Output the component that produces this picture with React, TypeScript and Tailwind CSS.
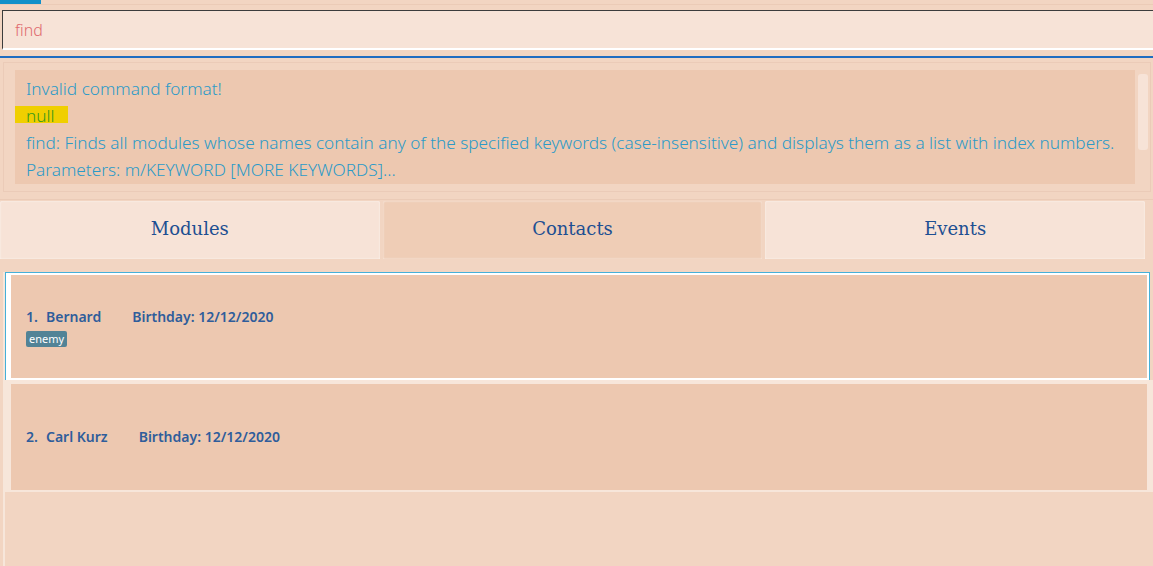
import React from 'react'

const contacts = [
    { id: 1, name: 'Bernard', birthday: '12/12/2020', tags: ['enemy'], selected: true },
    { id: 2, name: 'Carl Kurz', birthday: '12/12/2020', tags: [] as string[], selected: false },
]

const tabs = [
    { label: 'Modules', active: false },
    { label: 'Contacts', active: true },
    { label: 'Events', active: false },
]

export default function App() {
    return (
        <div className="w-[1153px] h-[566px] overflow-hidden bg-[#f2d5c2] flex flex-col font-['Noto_Sans',sans-serif]">
            {/* Top tab indicator */}
            <div className="h-[5px] flex-shrink-0 border-b border-[#ebcbb7]">
                <div className="w-[41px] h-[4px] bg-[#1190c9]" />
            </div>

            {/* Command box */}
            <div className="mt-[5px] ml-[2px] h-[40px] flex-shrink-0 bg-[#f7e3d7] border-t border-l border-[#3c3c3c] border-b-2 border-b-white flex items-center pl-[12px]">
                <span className="text-[16px] font-light text-[#e06a6e]">find</span>
            </div>

            <div className="mt-[6px] h-[2px] flex-shrink-0 bg-[#1f6cc1]" />

            {/* Result display */}
            <div className="mt-[4px] ml-[3px] mr-[2px] h-[130px] flex-shrink-0 border border-[#ebcbb8] flex pl-[11px] pt-[7px] pb-[7px]">
                <div className="flex-1 bg-[#edc8b0] pl-[11px] pt-[5px] text-[17.2px] leading-[27px] font-light text-[#2b9ac8] whitespace-nowrap overflow-hidden">
                    <div>Invalid command format!</div>
                    <div className="relative">
                        <span className="absolute -left-[15px] top-[4px] w-[57px] h-[17px] bg-[#f0cf00]" />
                        <span className="relative text-[#3a9a1a]">null</span>
                    </div>
                    <div>
                        find: Finds all modules whose names contain any of the specified keywords (case-insensitive) and displays them as a list with index numbers.
                    </div>
                    <div>Parameters: m/KEYWORD [MORE KEYWORDS]...</div>
                </div>
                <div className="w-[15px] flex-shrink-0 pl-[3px] pt-[4px]">
                    <div className="w-[10px] h-[76px] rounded-[3px] bg-[#f7e3d7]" />
                </div>
            </div>

            {/* Tabs */}
            <div className="mt-[7px] flex-shrink-0 border-t border-[#ebcbb7] pt-[1px]">
                <div className="flex gap-[3px] pr-[8px] h-[58px]">
                    {tabs.map(t => (
                        <div
                            key={t.label}
                            className={`flex-1 flex items-center justify-center rounded-t-[2px] shadow-[inset_0_0_2px_rgba(255,255,255,0.8)] ${t.active ? 'bg-[#efcdb6]' : 'bg-[#f7e3d7]'}`}
                        >
                            <span className="text-[18px] leading-[24px] -mt-[2px] text-[#1d4f92] font-['DejaVu_Serif',serif]">{t.label}</span>
                        </div>
                    ))}
                </div>
            </div>

            {/* Contact list */}
            <div className="mt-[13px] flex-1 ml-[3px] border-l-2 border-[#f7e6da] flex flex-col">
                {contacts.map(c => (
                    <div
                        key={c.id}
                        className={`flex ${c.selected ? 'h-[109px] border border-[#45b0d8] bg-white p-[2px] pl-[5px] mr-[3px]' : 'h-[112px] px-[6px] pt-[4px] pb-[2px] bg-[#f7e6da] -mt-[1px]'}`}
                    >
                        <div className="flex-1 bg-[#edc8b0] flex flex-col justify-center pl-[15px] font-semibold text-[#2f5d9b]">
                            <div className="flex items-baseline text-[14px] leading-[20px]">
                                <span className="w-[20px]">{c.id}.</span>
                                <span className="mr-[31px]">{c.name}</span>
                                <span>Birthday: {c.birthday}</span>
                            </div>
                            {c.tags.length > 0 && (
                                <div className="flex mt-[4px]">
                                    {c.tags.map(tag => (
                                        <span key={tag} className="bg-[#528396] text-white text-[11px] leading-[16px] px-[3px] rounded-[2px] font-normal">
                                            {tag}
                                        </span>
                                    ))}
                                </div>
                            )}
                        </div>
                    </div>
                ))}
            </div>
        </div>
    )
}
